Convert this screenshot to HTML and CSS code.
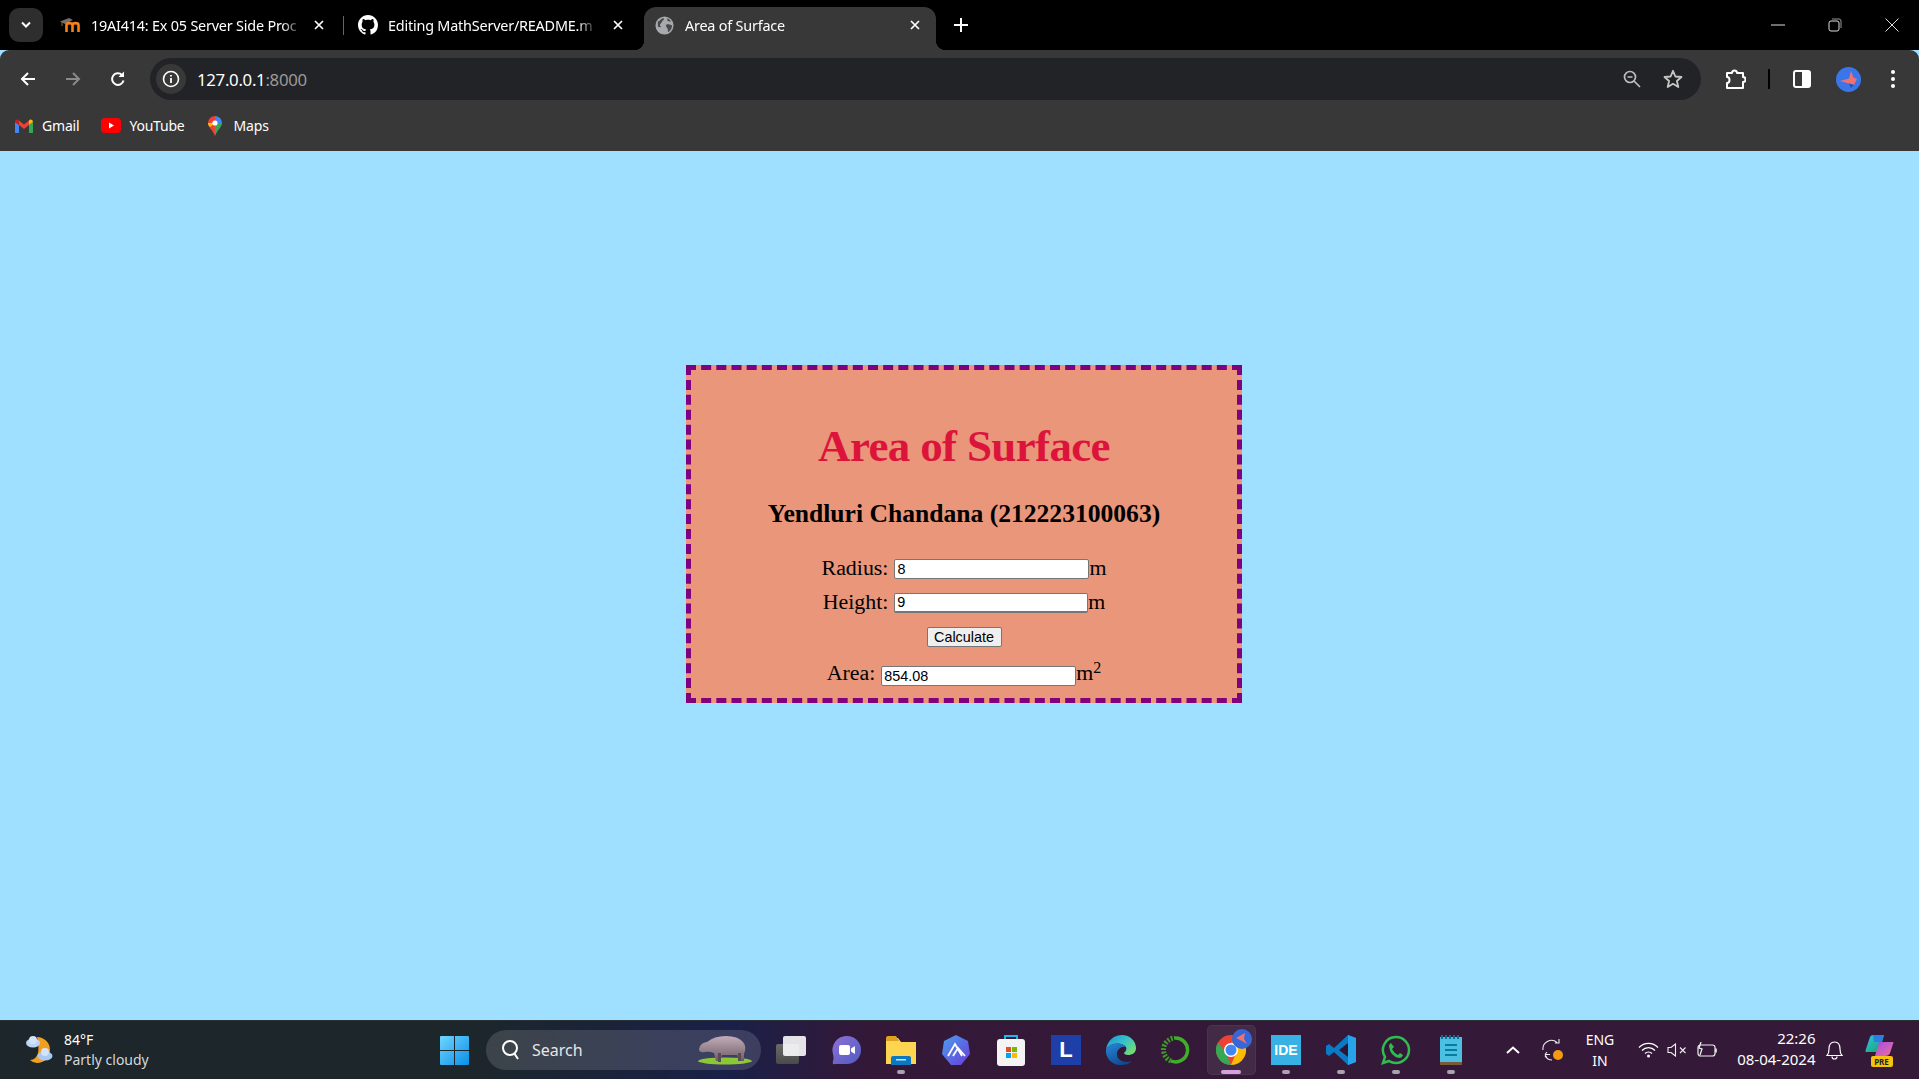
FILE: index.html
```html
<!DOCTYPE html>
<html lang="en">
<head>
<meta charset="utf-8">
<title>Area of Surface</title>
<link rel="stylesheet" href="styles.css">
</head>
<body>
<div class="browser">
  <header class="tabstrip">
    <div class="tabmenu"><svg width="12" height="8" viewBox="0 0 12 8"><path d="M2 1.500 6 5.500 10 1.500" fill="none" stroke="#fff" stroke-width="2"/></svg></div>
    <div class="tab tab-one">
      <svg class="fav" width="20" height="14" viewBox="0 0 20 14"><path d="M0 3.500 9 0 13 2 5 6z" fill="#6f6f6f"/><path d="M2 4V8" stroke="#8a6a3a" stroke-width="1"/><path d="M6.500 14V7C6.500 4.500 12.500 4.500 12.500 7V14M12.500 7C12.500 4.500 18.500 4.500 18.500 7V14" fill="none" stroke="#f98012" stroke-width="2.600"/></svg>
      <span class="tab-title">19AI414: Ex 05 Server Side Proc</span>
      <svg class="tabx" width="10" height="10" viewBox="0 0 10 10"><path d="M1 1 9 9M9 1 1 9" stroke="#fff" stroke-width="1.700"/></svg>
    </div>
    <div class="tabsep"></div>
    <div class="tab tab-two">
      <svg class="fav" width="20" height="20" viewBox="0 0 16 16"><path fill="#fff" d="M8 0C3.58 0 0 3.58 0 8c0 3.54 2.29 6.53 5.47 7.59.4.07.55-.17.55-.38 0-.19-.01-.82-.01-1.49-2.01.37-2.53-.49-2.69-.94-.09-.23-.48-.94-.82-1.13-.28-.15-.68-.52-.01-.53.63-.01 1.08.58 1.23.82.72 1.21 1.87.87 2.33.66.07-.52.28-.87.51-1.07-1.78-.2-3.64-.89-3.64-3.95 0-.87.31-1.59.82-2.15-.08-.2-.36-1.02.08-2.12 0 0 .67-.21 2.2.82.64-.18 1.32-.27 2-.27.68 0 1.36.09 2 .27 1.53-1.04 2.2-.82 2.2-.82.44 1.1.16 1.92.08 2.12.51.56.82 1.27.82 2.15 0 3.07-1.87 3.75-3.65 3.95.29.25.54.73.54 1.48 0 1.07-.01 1.93-.01 2.2 0 .21.15.46.55.38A8.013 8.013 0 0016 8c0-4.42-3.58-8-8-8z"/></svg>
      <span class="tab-title">Editing MathServer/README.m</span>
      <svg class="tabx" width="10" height="10" viewBox="0 0 10 10"><path d="M1 1 9 9M9 1 1 9" stroke="#fff" stroke-width="1.700"/></svg>
    </div>
    <div class="tab tab-active">
      <svg class="fav" width="19" height="19" viewBox="0 0 20 20"><circle cx="10" cy="10" r="9.500" fill="#a7a9ac"/><path d="M3 6c2-1 3-3 6-4 1 1 0 2-1 3s-1 2-2 3-1 2 0 3-2 1-3 0zM12 9c2-1 4 0 6 1 0 3-2 6-4 7-1-2 0-3-1-4s-2-3-1-4zM13 2c1 1 3 2 4 4-2 0-3-1-4-1z" fill="#46484b"/></svg>
      <span class="tab-title">Area of Surface</span>
      <svg class="tabx" width="10" height="10" viewBox="0 0 10 10"><path d="M1 1 9 9M9 1 1 9" stroke="#fff" stroke-width="1.700"/></svg>
    </div>
    <svg class="newtab" width="14" height="14" viewBox="0 0 14 14"><path d="M7 0V14M0 7H14" stroke="#fff" stroke-width="2"/></svg>
    <div class="wincontrols">
      <svg width="14" height="2" viewBox="0 0 14 2"><path d="M0 1H14" stroke="#ddd" stroke-width="1"/></svg>
      <svg width="14" height="14" viewBox="0 0 14 14"><rect x="1" y="3" width="10" height="10" rx="2" fill="none" stroke="#ddd"/><path d="M4 1H11Q13 1 13 3V10" fill="none" stroke="#999"/></svg>
      <svg width="14" height="14" viewBox="0 0 14 14"><path d="M.5.5 13.500 13.500M13.500.5.5 13.500" stroke="#ddd" stroke-width="1"/></svg>
    </div>
  </header>

  <div class="toolbar">
    <div class="navrow">
      <svg class="nav" width="16" height="16" viewBox="0 0 16 16"><path d="M15 8H2M8 2 2 8 8 14" fill="none" stroke="#fff" stroke-width="2"/></svg>
      <svg class="nav" width="16" height="16" viewBox="0 0 16 16"><path d="M1 8H14M8 2 14 8 8 14" fill="none" stroke="#8a8a8a" stroke-width="2"/></svg>
      <svg class="nav" width="16" height="16" viewBox="0 0 16 16"><path d="M13.500 9.500A5.800 5.800 0 1 1 12 4" fill="none" stroke="#fff" stroke-width="2"/><path d="M14 .5V6H8.500z" fill="#fff"/></svg>
      <div class="omnibox">
        <div class="sitechip"><svg width="18" height="18" viewBox="0 0 18 18"><circle cx="9" cy="9" r="7.500" fill="none" stroke="#fff" stroke-width="1.600"/><path d="M9 8V13M9 5V6.500" stroke="#fff" stroke-width="1.800"/></svg></div>
        <span class="url">127.0.0.1<span class="port">:8000</span></span>
        <svg class="omni-zoom" width="18" height="18" viewBox="0 0 18 18"><circle cx="7" cy="7" r="5.500" fill="none" stroke="#bdbdbd" stroke-width="1.700"/><path d="M4.500 7H9.500M11 11 17 17" stroke="#bdbdbd" stroke-width="1.700"/></svg>
        <svg class="omni-star" width="20" height="20" viewBox="0 0 20 20"><path d="M10 1.800 12.400 7.500 18.500 8 13.900 12 15.300 18 10 14.800 4.700 18 6.100 12 1.500 8 7.600 7.500z" fill="none" stroke="#c7c7c7" stroke-width="1.800" stroke-linejoin="round"/></svg>
      </div>
      <svg class="ext" width="21" height="21" viewBox="0 0 21 21"><path d="M2 4H7Q7 1.500 9.500 1.500T12 4H18V8Q20.500 8 20.500 10.500T18 13V19H2V14Q4.500 14 4.500 11T2 8z" fill="none" stroke="#fff" stroke-width="2" stroke-linejoin="round"/></svg>
      <div class="toolsep"></div>
      <svg class="panel" width="18" height="18" viewBox="0 0 18 18"><rect x="1" y="1" width="16" height="16" rx="2" fill="none" stroke="#fff" stroke-width="2"/><rect x="9" y="1" width="8" height="16" fill="#fff"/></svg>
      <svg class="avatar" width="25" height="25" viewBox="0 0 25 25"><circle cx="12.500" cy="12.500" r="12.500" fill="#3a76ea"/><path d="M4 14 13 11.500 15 4 17.500 10.500 21 12 18 18 13 16.500z" fill="#f0716f"/><path d="M13 16.500 18 18 15 21z" fill="#2452ad"/></svg>
      <svg class="dots" width="4" height="18" viewBox="0 0 4 18"><circle cx="2" cy="2" r="2" fill="#fff"/><circle cx="2" cy="9" r="2" fill="#fff"/><circle cx="2" cy="16" r="2" fill="#fff"/></svg>
    </div>
    <nav class="bookmarks">
      <a class="bm bm-gmail"><svg width="18" height="14" viewBox="0 0 18 14"><path d="M0 3V14H4V6z" fill="#4285f4"/><path d="M18 3V14H14V6z" fill="#34a853"/><path d="M4 6 9 10 14 6V1.500L9 5.500 4 1.500z" fill="#ea4335"/><path d="M0 3Q0 0 3 .5L4 1.500V6z" fill="#c5221f"/><path d="M18 3Q18 0 15 .5L14 1.500V6z" fill="#fbbc04"/></svg>Gmail</a>
      <a class="bm bm-yt"><svg width="20" height="15" viewBox="0 0 20 15"><rect width="20" height="15" rx="4" fill="#f00"/><path d="M8 4.500 13 7.500 8 10.500z" fill="#fff"/></svg>YouTube</a>
      <a class="bm bm-maps"><svg width="16" height="20" viewBox="0 0 16 20"><path d="M8 0A7 7 0 0 0 1 7C1 11 5 13 8 20z" fill="#ea4335"/><path d="M8 0A7 7 0 0 1 15 7L8 7z" fill="#4285f4"/><path d="M8 20C11 13 15 11 15 7H8z" fill="#34a853"/><path d="M1 7C1 9 2 10 3 11L8 7z" fill="#fbbc04"/><circle cx="8" cy="7" r="2.600" fill="#fff"/></svg>Maps</a>
    </nav>
  </div>

  <main class="page">
    <section class="card">
      <h1 class="title">Area of Surface</h1>
      <h2 class="author">Yendluri Chandana (212223100063)</h2>
      <form class="calc">
        <div class="row row-r"><label class="lbl" for="r">Radius:</label><input class="field" id="r" type="text" value="8"><span>m</span></div>
        <div class="row"><label class="lbl" for="h">Height:</label><input class="field field-h" id="h" type="text" value="9"><span>m</span></div>
        <div class="row row-btn"><button class="calcbtn" type="button">Calculate</button></div>
        <div class="row row-area"><label class="lbl" for="a">Area:</label><input class="field" id="a" type="text" value="854.08"><span class="unit">m<sup class="sq">2</sup></span></div>
      </form>
    </section>
  </main>

  <footer class="taskbar">
    <div class="weather">
      <svg width="30" height="30" viewBox="0 0 30 30"><path d="M12 2A13 13 0 0 1 12 28Q8 28 5 25 17 24 12 2z" fill="#f29f20"/><ellipse cx="8" cy="8" rx="7" ry="4.500" fill="#bcd4f5"/><ellipse cx="20" cy="21" rx="7.500" ry="4.500" fill="#a9c8f2"/><circle cx="20" cy="17" r="4" fill="#d3e3fa"/><circle cx="8" cy="5" r="4" fill="#d3e3fa"/></svg>
      <div class="weather-text"><span class="temp">84°F</span><span class="cond">Partly cloudy</span></div>
    </div>
    <svg class="winlogo" width="29" height="29" viewBox="0 0 29 29"><defs><linearGradient id="wg" x1="0" y1="0" x2="1" y2="1"><stop offset="0" stop-color="#6fd6ff"/><stop offset="1" stop-color="#0a8fe8"/></linearGradient></defs><path d="M0 1Q0 0 1 0H14V14H0zM15 0H28Q29 0 29 1V14H15zM0 15H14V29H1Q0 29 0 28zM15 15H29V28Q29 29 28 29H15z" fill="url(#wg)"/></svg>
    <div class="search">
      <svg width="20" height="22" viewBox="0 0 20 22"><circle cx="9" cy="9" r="7" fill="none" stroke="#fff" stroke-width="2"/><path d="M13 14 17 20" stroke="#fff" stroke-width="2"/></svg>
      <span class="search-text">Search</span>
      <svg class="tapir" width="54" height="30" viewBox="0 0 54 30"><defs><linearGradient id="tp" x1="0" y1="0" x2="0" y2="1"><stop offset="0" stop-color="#c3aeb8"/><stop offset="1" stop-color="#6f5c68"/></linearGradient></defs><ellipse cx="27" cy="26" rx="27" ry="3.500" fill="#8bc934"/><path d="M1 14Q2 8 9 7 16 1 28 1 40 1 45 7 49 12 46 19L46 26H41L39 20H24L22 26H18L16 18Q11 16 7 17 1 18 1 14z" fill="url(#tp)"/><rect x="20" y="18" width="3" height="9" fill="#5a4a55"/><rect x="40" y="18" width="3" height="8" fill="#5a4a55"/></svg>
    </div>
    <div class="apps">
      <div class="app"><svg width="30" height="28" viewBox="0 0 30 28"><defs><linearGradient id="tv" x1="0" y1="0" x2="0" y2="1"><stop offset="0" stop-color="#6a6a6a"/><stop offset="1" stop-color="#4a4a4a"/></linearGradient></defs><rect y="8" width="23" height="20" rx="2" fill="url(#tv)"/><rect x="7" width="23" height="20" rx="2" fill="#fff" fill-opacity=".88"/></svg></div>
      <div class="app"><svg width="29" height="29" viewBox="0 0 29 29"><defs><linearGradient id="ch" x1="0" y1="0" x2="1" y2="1"><stop offset="0" stop-color="#8f6fd8"/><stop offset="1" stop-color="#4f5cc0"/></linearGradient></defs><path d="M15 0A14 14 0 0 1 15 28H3Q0 29 1 25 2 23 1 18A14 14 0 0 1 15 0z" fill="url(#ch)"/><rect x="7" y="9" width="11" height="10" rx="2" fill="#fff"/><path d="M19 12.500 23 10V18L19 15.500z" fill="#fff"/></svg></div>
      <div class="app run"><svg width="30" height="29" viewBox="0 0 30 29"><path d="M0 2H12L15 6H30V28H0z" fill="#fdd550"/><path d="M0 2Q0 0 2 0H10L13 5H0z" fill="#e0a020"/><path d="M5 29V22Q5 20 7 20H23Q25 20 25 22V29z" fill="#0c78c0"/><rect x="10" y="23" width="10" height="1.500" fill="#bfe6ff"/></svg></div>
      <div class="app"><svg width="28" height="30" viewBox="0 0 28 30"><defs><linearGradient id="ag" x1="0" y1="0" x2="1" y2="1"><stop offset="0" stop-color="#4aa0f0"/><stop offset="1" stop-color="#6a3cd8"/></linearGradient></defs><path d="M14 0 26 6 28 19 19 30H9L0 19 2 6z" fill="url(#ag)"/><path d="M6 21 13 9 20 21M11 21 16 13 23 21" fill="none" stroke="#fff" stroke-width="1.800"/></svg></div>
      <div class="app"><svg width="28" height="31" viewBox="0 0 28 31"><path d="M8 6V1H20V6" fill="none" stroke="#22b5e8" stroke-width="2"/><rect y="4" width="28" height="27" rx="3" fill="#f4f4f4"/><rect x="9" y="12" width="5" height="5" fill="#e74c25"/><rect x="15" y="12" width="5" height="5" fill="#7ab800"/><rect x="9" y="18" width="5" height="5" fill="#00a4ef"/><rect x="15" y="18" width="5" height="5" fill="#ffb900"/></svg></div>
      <div class="app"><div class="l-tile">L</div></div>
      <div class="app"><svg width="30" height="30" viewBox="0 0 30 30"><defs><linearGradient id="eg" x1="0" y1="0" x2="1" y2=".7"><stop offset="0" stop-color="#1d8fd8"/><stop offset=".55" stop-color="#35c1c9"/><stop offset="1" stop-color="#74dc73"/></linearGradient><linearGradient id="eb" x1="0" y1="0" x2=".6" y2="1"><stop offset="0" stop-color="#2a86d8"/><stop offset="1" stop-color="#0d4a92"/></linearGradient></defs><path d="M0 14C2 5 8 0 16 0 24 0 30 6 30 13 30 18 26 20 22 20 20 20 18 19 18 18 20 16 21 14 20 12 16 7 6 7 0 14z" fill="url(#eg)"/><path d="M0 14C-1 23 6 30 15 30 19 30 23 29 26 26 18 29 11 25 11 19 11 15 15 11 20 12 16 7 6 7 0 14z" fill="url(#eb)"/></svg></div>
      <div class="app"><svg width="30" height="30" viewBox="0 0 30 30"><path d="M13 3A12 12 0 1 1 10 26" fill="none" stroke="#3fae29" stroke-width="3.500"/><path d="M10 26A12 12 0 0 1 13 3" fill="none" stroke="#3f9a29" stroke-width="5" stroke-dasharray="2 1.500"/></svg></div>
      <div class="app app-active run-active">
        <svg class="chrome" width="30" height="30" viewBox="0 0 30 30"><circle cx="15" cy="15" r="15" fill="#ea4335"/><path d="M15 30A15 15 0 0 1 2 7.500L9.800 18z" fill="#34a853"/><path d="M15 30A15 15 0 0 0 28 7.500H15L20 18z" fill="#fbbc04"/><circle cx="15" cy="15" r="7" fill="#fff"/><circle cx="15" cy="15" r="5.500" fill="#4285f4"/></svg>
        <svg class="chrome-badge" width="20" height="20" viewBox="0 0 20 20"><circle cx="10" cy="10" r="10" fill="#3567d8"/><path d="M4 9 13 4 12 10 15 15 10 12z" fill="#f0716f"/></svg>
      </div>
      <div class="app run"><div class="ide-tile">IDE</div></div>
      <div class="app run"><svg width="30" height="30" viewBox="0 0 30 30"><path d="M22 0 30 3V27L22 30 8 17 3 21 0 19V11L3 9 8 13z" fill="#0a7ac4"/><path d="M22 0 30 3V27L22 30z" fill="#28a3ea"/><path d="M22 8V22L13 15z" fill="#2d1533"/></svg></div>
      <div class="app run"><svg width="30" height="30" viewBox="0 0 30 30"><path d="M15 2A13 13 0 0 1 15 28Q11 28 8 26L2 28 4 22A13 13 0 0 1 15 2z" fill="none" stroke="#2ebd4e" stroke-width="2.500"/><path d="M10 8 13 12 11 14Q13 18 17 20L19 18 22 20Q21 23 18 23 9 21 8 11 8 9 10 8z" fill="#2ebd4e"/></svg></div>
      <div class="app run"><svg width="22" height="30" viewBox="0 0 22 30"><rect y="2" width="22" height="27" fill="#4cc0e0"/><rect y="27" width="22" height="3" fill="#7a5a3a"/><path d="M2 0V4M6 0V4M10 0V4M14 0V4M18 0V4" stroke="#0a6f93" stroke-width="2"/><path d="M5 10H17M5 15H17M5 20H17" stroke="#0a7ba0" stroke-width="2"/></svg></div>
    </div>
    <div class="tray">
      <div class="tray-slot t-chev"><svg width="14" height="8" viewBox="0 0 14 8"><path d="M1 7 7 1.500 13 7" fill="none" stroke="#fff" stroke-width="2"/></svg></div>
      <div class="tray-slot t-sync"><svg width="22" height="22" viewBox="0 0 22 22"><path d="M1 11A8.500 8.500 0 0 1 15 3.500M17 0V4H13M3 15.500H8M3 15.500 5 13M3 15.500 5 19M3 17A8.500 8.500 0 0 0 10 21" fill="none" stroke="#eee" stroke-width="1.100"/><circle cx="16" cy="16" r="5" fill="#f59a12"/></svg></div>
      <div class="tray-slot t-lang"><span>ENG</span><span>IN</span></div>
      <div class="tray-slot t-wifi"><svg width="21" height="16" viewBox="0 0 21 16"><path d="M1 5.500A13 13 0 0 1 20 5.500M4 8.500A9 9 0 0 1 17 8.500M7 11.500A5 5 0 0 1 14 11.500" fill="none" stroke="#fff" stroke-width="1.300"/><circle cx="10.500" cy="14" r="1.500" fill="#fff"/></svg></div>
      <div class="tray-slot t-vol"><svg width="20" height="14" viewBox="0 0 20 14"><path d="M1 4.500H4L8.500 1V13L4 9.500H1z" fill="none" stroke="#eee" stroke-width="1.100"/><path d="M13 4.500 18.500 10M18.500 4.500 13 10" stroke="#eee" stroke-width="1.100"/></svg></div>
      <div class="tray-slot t-bat"><svg width="21" height="16" viewBox="0 0 21 16"><rect x="1" y="3" width="17" height="11" rx="2.500" fill="none" stroke="#eee" stroke-width="1.200"/><path d="M19 6.500V10.500" stroke="#eee" stroke-width="1.600"/><path d="M4 0 2 6 5 7 3 13" fill="none" stroke="#eee" stroke-width="1.300"/></svg></div>
      <div class="clock"><span>22:26</span><span>08-04-2024</span></div>
      <div class="tray-slot t-bell"><svg width="17" height="19" viewBox="0 0 17 19"><path d="M1 14.500Q3 12.500 3 8 3 1 8.500 1T14 8Q14 12.500 16 14.500zM6 15.500Q6 18 8.500 18T11 15.500" fill="none" stroke="#fff" stroke-width="1.200"/></svg></div>
      <div class="t-copilot"><svg width="30" height="30" viewBox="0 0 30 30"><defs><linearGradient id="c1" x1="0" y1="0" x2="1" y2="1"><stop offset="0" stop-color="#2fc6f0"/><stop offset="1" stop-color="#16a05a"/></linearGradient><linearGradient id="c2" x1="0" y1="0" x2="1" y2="1"><stop offset="0" stop-color="#a04ce0"/><stop offset="1" stop-color="#f070a0"/></linearGradient></defs><path d="M8 1H19L14 18H1Q0 18 1 15L5 3Q6 1 8 1z" fill="url(#c1)"/><path d="M14 8H28Q29 8 28 10L25 19Q24 22 20 22H10z" fill="url(#c2)"/><path d="M8 1H19L17 8H9z" fill="#2b7fe0"/></svg><span class="pre">PRE</span></div>
    </div>
  </footer>
</div>
</body>
</html>
```

FILE: styles.css
```css
* { box-sizing: border-box; }
html, body { margin: 0; height: 100%; overflow: hidden; }
body { font-family: "Noto Sans", "Open Sans", sans-serif; color: #fff; }
.browser { display: flex; flex-direction: column; height: 1079px; background: #9fdfff; }

/* tab strip */
.tabstrip { height: 50px; flex: none; background: #000; display: flex; align-items: flex-end; position: relative; }
.tabmenu { width: 34px; height: 34px; margin: 0 0 8px 9px; border-radius: 10px; background: #2e2e2e; display: flex; align-items: center; justify-content: center; }
.tab { height: 43px; display: flex; align-items: center; position: relative; font-size: 14.400px; letter-spacing: -.2px; flex: none; padding-bottom: 7px; }
.fav { flex: none; }
.tab-title { display: block; overflow: hidden; white-space: nowrap; -webkit-mask-image: linear-gradient(90deg, #000 90%, transparent); mask-image: linear-gradient(90deg, #000 90%, transparent); }
.tab-one { width: 300px; padding-left: 17px; }
.tab-one .tab-title { width: 212px; margin-left: 11px; margin-right: 11px; }
.tabsep { width: 1px; height: 19px; background: #666; margin: 0 0 15px 0; flex: none; }
.tab-two { width: 300px; padding-left: 14px; }
.tab-two .tab-title { width: 210px; margin-left: 10px; margin-right: 15px; }
.tab-active { width: 292px; background: #383838; border-radius: 12px 12px 0 0; padding-left: 11px; }
.tab-active .tab-title { width: 215px; margin-left: 11px; margin-right: 10px; }
.tab-active::before, .tab-active::after { content: ""; position: absolute; bottom: 0; width: 10px; height: 10px; }
.tab-active::before { left: -10px; background: radial-gradient(circle at 0 0, transparent 10px, #383838 10.500px); }
.tab-active::after { right: -10px; background: radial-gradient(circle at 100% 0, transparent 10px, #383838 10.500px); }
.newtab { margin: 0 0 18px 18px; flex: none; }
.wincontrols { margin-left: auto; display: flex; align-items: center; gap: 43px; padding-right: 20px; height: 50px; align-self: flex-start; }

/* toolbar */
.toolbar { height: 101px; flex: none; background: #383838; border-radius: 9px 9px 0 0; }
.navrow { height: 58px; display: flex; align-items: center; padding-left: 20px; }
.nav { flex: none; margin-right: 29px; }
.omnibox { flex: none; width: 1551px; height: 42px; margin-left: -5px; border-radius: 21px; background: #222326; display: flex; align-items: center; padding-left: 6px; }
.sitechip { width: 30px; height: 30px; border-radius: 50%; background: #383838; display: flex; align-items: center; justify-content: center; flex: none; }
.url { margin-left: 11px; font-size: 16.800px; letter-spacing: -.3px; }
.port { color: #9a9a9a; }
.omni-zoom { margin-left: auto; }
.omni-star { margin-left: 22px; margin-right: 18px; }
.ext { margin-left: 24px; flex: none; }
.toolsep { width: 2px; height: 20px; background: #000; margin-left: 22px; flex: none; }
.panel { margin-left: 23px; flex: none; }
.avatar { margin-left: 25px; flex: none; }
.dots { margin-left: 30px; flex: none; }
.bookmarks { height: 35px; display: flex; align-items: center; padding-left: 15px; font-size: 14px; letter-spacing: -.2px; }
.bm { display: flex; align-items: center; }
.bm-gmail svg { margin-right: 9px; }
.bm-yt { margin-left: 22px; }
.bm-yt svg { margin-right: 8px; }
.bm-maps { margin-left: 22px; }
.bm-maps svg { margin-right: 11px; }

/* page */
.page { flex: none; height: 869px; padding: 214px 0 0 686px; }
.card { width: 556px; height: 338px; border: 5px dashed #800080; background: #e9967a; color: #000; font-family: "Liberation Serif", "Times New Roman", serif; text-align: center; padding-top: 53px; }
.title { margin: 0; font-size: 45px; line-height: 46px; font-weight: 700; letter-spacing: -.65px; color: #dc143c; }
.author { margin: 31px 0 0; font-size: 25.600px; line-height: 28px; font-weight: 700; }
.calc { margin-top: 23px; font-size: 21.900px; }
.row { display: flex; justify-content: center; align-items: center; height: 33px; }
.row-r { height: 34px; }
.row-btn { height: 37px; }
.row-area { height: 34px; margin-top: 3px; }
.row-area .lbl, .unit { margin-bottom: 5px; }
.lbl { margin-right: 6px; }
.field { width: 195px; height: 20px; padding: 0 2px; border: 1px solid #767676; border-radius: 2px; background: #fff; color: #000; font-family: "Liberation Sans", Arial, sans-serif; font-size: 14.400px; margin: 2px 0 0; }
.field-h { width: 194px; border-bottom-width: 2px; }
.calcbtn { width: 75px; height: 20px; padding: 0; border: 1px solid #767676; border-radius: 2px; background: #efefef; color: #000; font-family: "Liberation Sans", Arial, sans-serif; font-size: 14.400px; }
.sq { font-size: 16px; line-height: 0; vertical-align: 7px; }

/* taskbar */
.taskbar { height: 59px; flex: none; display: flex; align-items: center; border-top: 1px solid #2b3034; background: linear-gradient(90deg, #1c262b 0, #1c262b 25%, #1a2048 38%, #331838 45%, #351a38 100%); }
.weather { width: 440px; flex: none; padding-left: 25px; display: flex; align-items: center; gap: 9px; }
.weather-text { display: flex; flex-direction: column; font-size: 14px; line-height: 20px; }
.temp { color: #fff; }
.cond { color: #d5d8da; }
.winlogo { flex: none; }
.search { width: 275px; height: 40px; margin-left: 17px; border-radius: 20px; background: rgba(255,255,255,.14); display: flex; align-items: center; padding-left: 15px; flex: none; }
.search-text { margin-left: 11px; font-size: 16px; color: #e6e6e6; }
.tapir { margin-left: auto; margin-right: 9px; }
.apps { margin-left: 2.500px; display: flex; flex: none; }
.app { width: 55px; height: 50px; display: flex; align-items: center; justify-content: center; position: relative; flex: none; }
.run::after, .run-active::after { content: ""; position: absolute; bottom: 1px; left: 50%; width: 8px; height: 4px; margin-left: -4px; border-radius: 2px; background: #a9a3ad; }
.app-active::before { content: ""; position: absolute; left: 3px; right: 3px; top: 0; bottom: 0; border-radius: 5px; background: rgba(255,255,255,.08); border: 1px solid rgba(255,255,255,.05); }
.chrome { position: relative; }
.run-active::after { width: 20px; margin-left: -10px; background: #d9a0dc; }
.chrome-badge { position: absolute; left: 28px; top: 4px; }
.l-tile { width: 30px; height: 30px; background: #1e3fa8; color: #fff; font-family: "Liberation Sans", sans-serif; font-weight: 700; font-size: 22px; line-height: 30px; text-align: center; }
.ide-tile { width: 30px; height: 30px; background: #38b2e4; color: #fff; font-family: "Liberation Sans", sans-serif; font-weight: 700; font-size: 14px; line-height: 30px; text-align: center; }
.tray { display: flex; align-items: center; flex: none; margin-left: 14.500px; color: #fff; }
.tray-slot { display: flex; align-items: center; justify-content: center; flex: none; }
.t-chev, .t-sync { width: 40px; }
.t-lang { width: 54px; flex-direction: column; font-size: 14px; line-height: 21px; }
.t-wifi { width: 29px; margin-left: 6.500px; }
.t-vol { width: 29px; }
.t-bat { width: 32px; }
.clock { width: 92px; display: flex; flex-direction: column; align-items: flex-end; font-size: 15px; line-height: 21px; padding-bottom: 2px; }
.t-bell { width: 38px; }
.t-copilot { width: 30px; height: 32px; margin-left: 11px; position: relative; }
.pre { position: absolute; left: 6px; bottom: -1px; width: 22px; height: 11px; background: #f5c211; border-radius: 2px; color: #222; font-size: 8px; font-weight: 700; line-height: 11px; text-align: center; }
```
